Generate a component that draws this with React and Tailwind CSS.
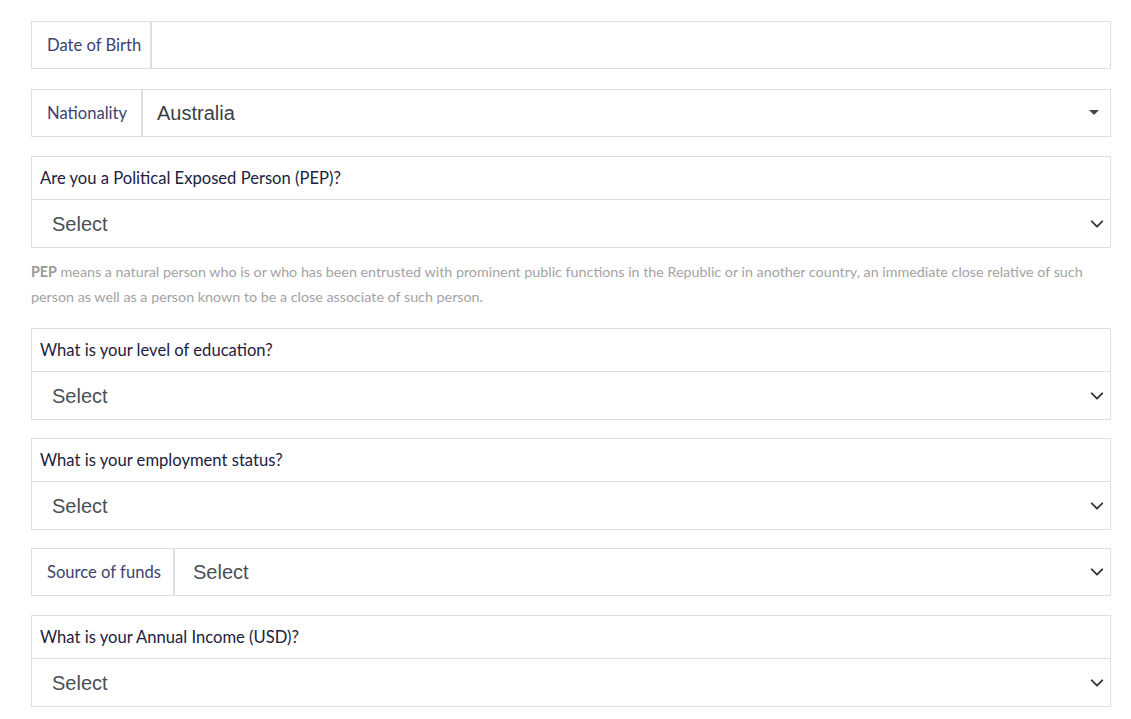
import React from "react";

const futura = { fontFamily: "Lato, 'Open Sans', sans-serif" };

function Chevron() {
  return (
    <svg width="14" height="14" viewBox="0 0 16 16" className="shrink-0">
      <path d="M2 5l6 6 6-6" fill="none" stroke="#343a40" strokeWidth="2.2" strokeLinecap="round" strokeLinejoin="round" />
    </svg>
  );
}

function SelectBox({ text, topless }) {
  return (
    <div
      className={`flex h-[48px] items-center justify-between border border-[#dcdfe6] bg-white pl-[20px] pr-[6px] ${topless ? "border-t-0" : ""}`}
    >
      <span className="text-[20px] text-[#495057]" style={{ fontFamily: "'Liberation Sans', Arial, sans-serif" }}>
        {text}
      </span>
      <Chevron />
    </div>
  );
}

function Question({ label }) {
  return (
    <div>
      <div className="flex h-[44px] items-center border border-[#dcdfe6] px-[8px]">
        <span className="text-[16.6px] text-[#1c2140]" style={futura}>
          {label}
        </span>
      </div>
      <SelectBox text="Select" topless />
    </div>
  );
}

function LabeledRow({ label, width, children }) {
  return (
    <div className="flex h-[48px] border border-[#dcdfe6]">
      <div
        className={`flex shrink-0 items-center border-r-2 border-[#dcdfe6] pl-[15px] ${width}`}
      >
        <span className="text-[16.6px] text-[#3d4270]" style={futura}>
          {label}
        </span>
      </div>
      <div className="flex flex-1 items-center">{children}</div>
    </div>
  );
}

export default function App() {
  return (
    <div className="min-h-[719px] w-[1131px] bg-white pt-[21px]">
      <div className="ml-[31px] flex w-[1080px] flex-col">
        <LabeledRow label="Date of Birth" width="w-[120px]" />

        <div className="mt-[20px]">
          <LabeledRow label="Nationality" width="w-[111px]">
            <div className="flex flex-1 items-center justify-between pl-[14px] pr-[11px]">
              <span className="text-[20px] text-[#3a3f44]" style={{ fontFamily: "'Liberation Sans', Arial, sans-serif" }}>
                Australia
              </span>
              <svg width="10" height="6" viewBox="0 0 10 6">
                <path d="M0 0h10L5 5z" fill="#444" />
              </svg>
            </div>
          </LabeledRow>
        </div>

        <div className="mt-[19px]">
          <Question label="Are you a Political Exposed Person (PEP)?" />
        </div>

        <p className="mt-[11px] text-[14.3px] leading-[25px] text-[#a3a3a3]" style={futura}>
          <span className="font-bold text-[#999]">PEP</span> means a natural person who is or who has been entrusted with prominent public functions in the Republic or in another country, an immediate close relative of such person as well as a person known to be a close associate of such person.
        </p>

        <div className="mt-[19px]">
          <Question label="What is your level of education?" />
        </div>

        <div className="mt-[18px]">
          <Question label="What is your employment status?" />
        </div>

        <div className="mt-[18px]">
          <div className="flex h-[48px] border border-[#dcdfe6]">
            <div className="flex w-[143px] shrink-0 items-center border-r-2 border-[#dcdfe6] pl-[15px]">
              <span className="text-[16.6px] text-[#3d4270]" style={futura}>
                Source of funds
              </span>
            </div>
            <div className="flex flex-1 items-center justify-between pl-[18px] pr-[6px]">
              <span className="text-[20px] text-[#495057]" style={{ fontFamily: "'Liberation Sans', Arial, sans-serif" }}>
                Select
              </span>
              <Chevron />
            </div>
          </div>
        </div>

        <div className="mt-[19px]">
          <Question label="What is your Annual Income (USD)?" />
        </div>
      </div>
    </div>
  );
}
